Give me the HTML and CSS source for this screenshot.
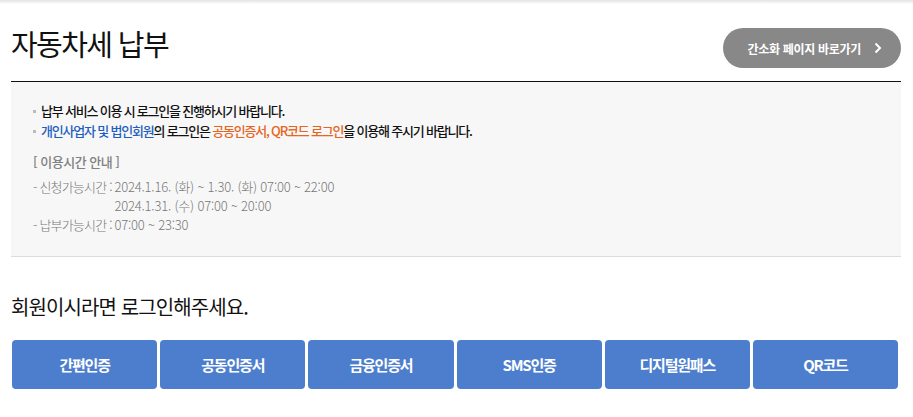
FILE: index.html
```html
<!DOCTYPE html>
<html lang="ko">

<head>
  <meta charset="UTF-8">
  <meta name="viewport" content="width=device-width, initial-scale=1.0">
  <title>자동차세 납부</title>
  <link rel="stylesheet" href="styles.css">
</head>

<body>
  <div class="top-shade"></div>

  <div class="wrap">
    <div class="title-row">
      <h1 class="page-title">자동차세 납부</h1>
      <a class="simple-btn" href="#">
        간소화 페이지 바로가기
        <svg width="8" height="12" viewBox="0 0 8 12">
          <path d="M1.5 1.5 L6 6 L1.5 10.5" fill="none" stroke="#fff" stroke-width="2" />
        </svg>
      </a>
    </div>

    <div class="notice">
      <ul class="notice-list">
        <li>납부 서비스 이용 시 로그인을 진행하시기 바랍니다.</li>
        <li><span class="blue">개인사업자 및 법인회원</span>의 로그인은 <span class="orange">공동인증서, QR코드 로그인</span>을 이용해 주시기 바랍니다.</li>
      </ul>

      <p class="time-title">[ 이용시간 안내 ]</p>
      <div class="time-row">
        <span class="time-label">- 신청가능시간 : </span>
        <span class="time-value">
          2024.1.16. (화) ~ 1.30. (화) 07:00 ~ 22:00<br>
          2024.1.31. (수) 07:00 ~ 20:00
        </span>
      </div>
      <div class="time-row">
        <span class="time-label">- 납부가능시간 : </span>
        <span class="time-value">07:00 ~ 23:30</span>
      </div>
    </div>

    <p class="login-msg">회원이시라면 로그인해주세요.</p>

    <div class="login-btns">
      <a href="#" class="login-btn">간편인증</a>
      <a href="#" class="login-btn">공동인증서</a>
      <a href="#" class="login-btn">금융인증서</a>
      <a href="#" class="login-btn">SMS인증</a>
      <a href="#" class="login-btn">디지털원패스</a>
      <a href="#" class="login-btn">QR코드</a>
    </div>
  </div>
</body>

</html>
```

FILE: styles.css
```css
body {
  margin: 0;
  background: #fff;
  font-family: "Noto Sans CJK KR", "Noto Sans", sans-serif;
  color: #111;
}

.top-shade {
  height: 4px;
  background: linear-gradient(#e2e2e2, #fff);
}

.wrap {
  padding: 0 12px 0 11px;
}

/* title + simple page button */
.title-row {
  display: flex;
  justify-content: space-between;
  align-items: flex-start;
  height: 77px;
  border-bottom: 1px solid #111;
}

.page-title {
  margin: 19px 0 0 0;
  font-size: 29px;
  line-height: 40px;
  font-weight: 400;
  letter-spacing: -1.6px;
}

.simple-btn {
  display: flex;
  align-items: center;
  gap: 13px;
  margin: 24px 0 0 0;
  height: 40px;
  padding: 0 19px 0 24px;
  border-radius: 20px;
  background: #888;
  color: #fff;
  font-size: 12px;
  font-weight: 700;
  letter-spacing: -0.3px;
  text-decoration: none;
}

/* notice box */
.notice {
  background: #f7f7f7;
  border-bottom: 1px solid #ddd;
  padding: 19px 22px 22px 22px;
}

.notice-list {
  list-style: none;
  margin: 0;
  padding: 0;
}

.notice-list li {
  position: relative;
  padding-left: 8px;
  font-size: 13px;
  line-height: 20px;
  font-weight: 500;
  letter-spacing: -1.2px;
  color: #111;
}

.notice-list li::before {
  content: "";
  position: absolute;
  left: 0;
  top: 9px;
  width: 3px;
  height: 3px;
  background: #bbb;
}

.blue {
  color: #1f5fbf;
}

.orange {
  color: #e8641e;
}

.time-title {
  margin: 11px 0 5px 0;
  font-size: 13px;
  line-height: 20px;
  font-weight: 500;
  color: #808080;
  letter-spacing: -0.5px;
}

.time-row {
  display: flex;
  font-size: 13px;
  line-height: 19px;
  font-weight: 300;
  color: #777;
  letter-spacing: -0.2px;
}

.time-label {
  white-space: pre;
  letter-spacing: -0.8px;
}

/* login */
.login-msg {
  margin: 37px 0 20px 0;
  font-size: 20px;
  line-height: 26px;
  font-weight: 400;
  letter-spacing: -0.9px;
  color: #111;
}

.login-btns {
  display: flex;
  gap: 3px;
  padding: 0 3px 0 1px;
}

.login-btn {
  flex: 1;
  display: flex;
  align-items: center;
  justify-content: center;
  height: 49px;
  border-radius: 4px;
  background: #4c7ecd;
  color: #fff;
  font-size: 15px;
  font-weight: 700;
  letter-spacing: -1.2px;
  text-decoration: none;
}
```
